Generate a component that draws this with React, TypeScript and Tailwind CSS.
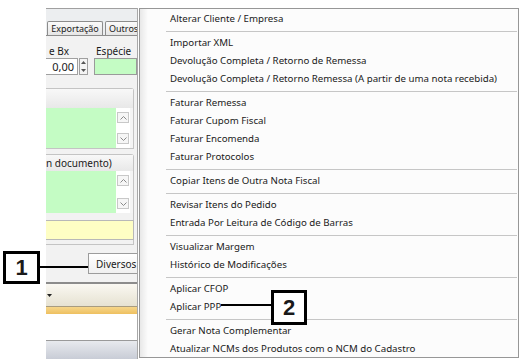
import React from "react";

type Item = { t: string } | { sep: true };

const items: Item[] = [
  { t: "Alterar Cliente / Empresa" },
  { sep: true },
  { t: "Importar XML" },
  { t: "Devolução Completa / Retorno de Remessa" },
  { t: "Devolução Completa / Retorno Remessa (A partir de uma nota recebida)" },
  { sep: true },
  { t: "Faturar Remessa" },
  { t: "Faturar Cupom Fiscal" },
  { t: "Faturar Encomenda" },
  { t: "Faturar Protocolos" },
  { sep: true },
  { t: "Copiar Itens de Outra Nota Fiscal" },
  { sep: true },
  { t: "Revisar Itens do Pedido" },
  { t: "Entrada Por Leitura de Código de Barras" },
  { sep: true },
  { t: "Visualizar Margem" },
  { t: "Histórico de Modificações" },
  { sep: true },
  { t: "Aplicar CFOP" },
  { t: "Aplicar PPP" },
  { sep: true },
  { t: "Gerar Nota Complementar" },
  { t: "Atualizar NCMs dos Produtos com o NCM do Cadastro" },
];

function Chevron({ up }: { up?: boolean }) {
  return (
    <svg width="7" height="4" viewBox="0 0 7 4">
      <path
        d={up ? "M0.5 3.5 L3.5 0.5 L6.5 3.5" : "M0.5 0.5 L3.5 3.5 L6.5 0.5"}
        fill="none"
        stroke="#8a8a8a"
        strokeWidth="1"
      />
    </svg>
  );
}

function ScrollBar() {
  return (
    <div className="w-[14px] flex flex-col justify-between bg-white py-[4px] px-[1px]">
      <div className="h-[11px] border border-[#c8c8c8] bg-[#f6f6f6] flex items-center justify-center">
        <Chevron up />
      </div>
      <div className="h-[11px] border border-[#c8c8c8] bg-[#f6f6f6] flex items-center justify-center">
        <Chevron />
      </div>
    </div>
  );
}

export default function App() {
  return (
    <div
      className="relative w-[524px] h-[362px] bg-white overflow-hidden text-[#1a1a1a]"
      style={{ fontFamily: '"Noto Sans", "Open Sans", sans-serif' }}
    >
      {/* App panel */}
      <div className="ml-[46px] mt-[8px] w-[92px] h-[351px] flex flex-col border-r border-[#a8a8a8] overflow-hidden bg-[#f0f0f0] text-[10px] leading-none">
        <div className="h-px bg-[#a0a0a0]" />
        <div className="h-[12px] bg-[#eceef0]" />
        {/* tabs */}
        <div className="h-[14px] flex items-end gap-[2px] bg-[#eceef0] pl-[1px] text-[9px]">
          <div className="h-[14px] w-[56px] shrink-0 border border-b-0 border-[#8c8c8c] rounded-t-[2px] bg-gradient-to-b from-[#fafafa] to-[#e6e6e6] flex items-center justify-center">
            Exportação
          </div>
          <div className="h-[14px] w-[40px] shrink-0 border border-b-0 border-[#8c8c8c] rounded-t-[2px] bg-gradient-to-b from-[#fafafa] to-[#e6e6e6] flex items-center pl-[3px]">
            Outros
          </div>
        </div>
        <div className="h-px bg-[#8c8c8c]" />
        <div className="flex-1 flex flex-col bg-[#f2f2f2]">
          {/* labels */}
          <div className="h-[22px] flex items-end pb-[2px] relative">
            <span className="ml-[3px]">e Bx</span>
            <span className="ml-[27px]">Espécie</span>
          </div>
          {/* inputs */}
          <div className="h-[17px] flex items-stretch">
            <div className="w-[32px] bg-white border-y border-r border-[#a0a0a0] flex items-center justify-end pr-[3px] text-[11px]">
              0,00
            </div>
            <div className="ml-[1px] w-[9px] border border-[#a0a0a0] bg-[#f4f4f4] flex flex-col items-center justify-around">
              <svg width="5" height="3" viewBox="0 0 5 3"><path d="M0 3 L2.5 0 L5 3Z" fill="#555" /></svg>
              <svg width="5" height="3" viewBox="0 0 5 3"><path d="M0 0 L2.5 3 L5 0Z" fill="#555" /></svg>
            </div>
            <div className="ml-[6px] flex-1 bg-[#c4fcc4] border border-[#9a9a9a]" />
          </div>
          <div className="h-[13px]" />
          {/* group 1 */}
          <div className="w-[88px] h-[61px] border-y border-r border-[#c4c4c4] rounded-tr-[3px] flex flex-col">
            <div className="h-[19px] bg-gradient-to-b from-[#f8f8f8] to-[#e8e8e8]" />
            <div className="h-[40px] flex pr-[3px] bg-[#f4f4f4]">
              <div className="flex-1 bg-[#c4fcc4]" />
              <ScrollBar />
            </div>
          </div>
          <div className="h-[5px]" />
          {/* group 2 */}
          <div className="w-[88px] h-[91px] border-y border-r border-[#c4c4c4] rounded-tr-[3px] flex flex-col">
            <div className="h-[16px] bg-gradient-to-b from-[#f8f8f8] to-[#e8e8e8] flex items-center">
              <span>n documento)</span>
            </div>
            <div className="h-[42px] flex pr-[3px] bg-[#f4f4f4]">
              <div className="flex-1 bg-[#c4fcc4]" />
              <ScrollBar />
            </div>
            <div className="h-[7px]" />
            <div className="w-[88px] h-[20px] bg-[#fefec4] border-y border-r border-[#b8b8b8]" />
          </div>
          {/* diversos area */}
          <div className="h-[37px] flex items-center pl-[42px]">
            <div className="h-[21px] w-[60px] shrink-0 border border-[#9c9c9c] bg-gradient-to-b from-white to-[#f0f0f0] flex items-center pl-[7px] text-[10px]">
              Diversos
            </div>
          </div>
          <div className="h-[2px] bg-[#8c8c8c]" />
          <div className="h-[22px] bg-gradient-to-b from-[#faf8f2] to-[#e6e2d2] flex items-center pl-[1px]">
            <svg width="5" height="3" viewBox="0 0 5 3"><path d="M0 0 L2.5 3 L5 0Z" fill="#222" /></svg>
          </div>
          <div className="h-px bg-[#a89c80]" />
          <div className="h-[7px] bg-gradient-to-b from-[#f6d68a] to-[#eec060]" />
          <div className="h-[26px] bg-white" />
          <div className="h-px bg-[#9a9a9a]" />
          <div className="flex-1 bg-gradient-to-b from-[#e8eaee] to-[#c8ccd6]" />
        </div>
      </div>

      {/* Context menu */}
      <div className="absolute left-[139px] top-[8px] w-[380px] h-[350px] border border-[#979797] bg-[#fcfcfc] pt-px text-[9.7px] leading-none">
        <div className="absolute left-0 top-0 bottom-0 w-[8px] bg-gradient-to-r from-[#e8e8e8] to-[#fcfcfc]" />
        {items.map((it, i) =>
          "sep" in it ? (
            <div key={i} className="h-[6px] flex items-center pl-[26px] pr-[1px]">
              <div className="h-px w-full bg-[#c6c6c6]" />
            </div>
          ) : (
            <div key={i} className="relative h-[18px] flex items-center pl-[30px] whitespace-nowrap">
              {it.t}
            </div>
          )
        )}
      </div>

      {/* Callout 1 */}
      <div className="absolute left-[40px] top-[266px] w-[48px] h-[2px] bg-black" />
      <div
        className="absolute left-[3px] top-[251px] w-[37px] h-[33px] border-[3px] border-black bg-white flex items-center justify-center text-[22px] font-bold leading-none"
        style={{ fontFamily: '"Liberation Sans", Arial, sans-serif' }}
      >
        1
      </div>

      {/* Callout 2 */}
      <div className="absolute left-[221px] top-[304px] w-[50px] h-[2px] bg-black" />
      <div
        className="absolute left-[271px] top-[290px] w-[36px] h-[35px] border-[3px] border-black bg-white flex items-center justify-center text-[22px] font-bold leading-none"
        style={{ fontFamily: '"Liberation Sans", Arial, sans-serif' }}
      >
        2
      </div>
    </div>
  );
}
